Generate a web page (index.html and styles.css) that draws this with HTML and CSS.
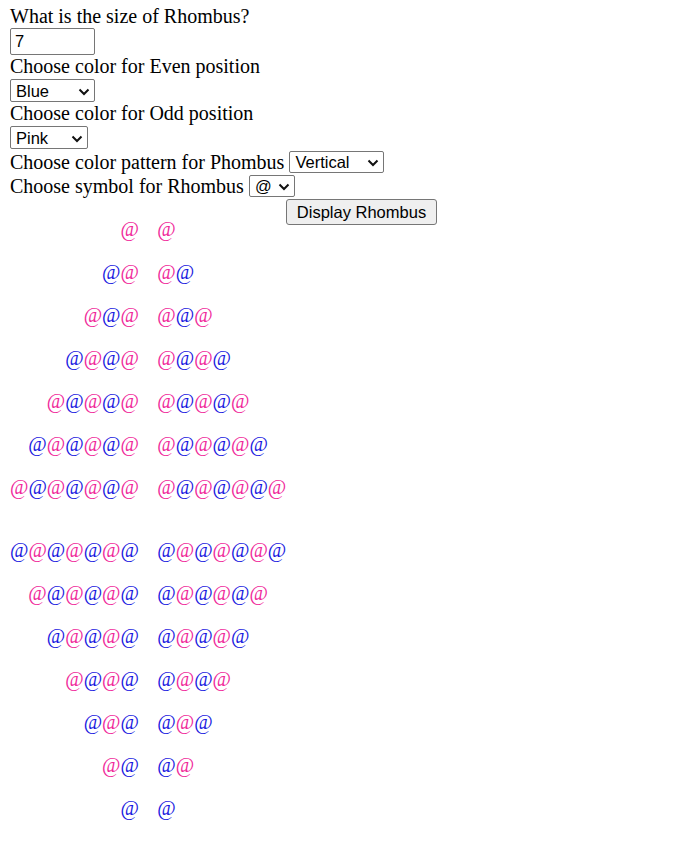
FILE: index.html
```html
<!DOCTYPE html>
<html>
<head>
<meta charset="utf-8">
<link rel="stylesheet" href="styles.css">
</head>
<body>
<div class="form">
  <div class="line">What is the size of Rhombus?</div>
  <input class="size" type="text" value="7">
  <div class="line">Choose color for Even position</div>
  <span class="sel sel-even"><select class="dd"><option>Blue</option></select><svg class="chev" width="12" height="8" viewBox="0 0 12 8"><path d="M1.5 1.5 L6 6 L10.5 1.5" fill="none" stroke="#111" stroke-width="2"/></svg></span>
  <div class="line">Choose color for Odd position</div>
  <span class="sel sel-odd"><select class="dd"><option>Pink</option></select><svg class="chev" width="12" height="8" viewBox="0 0 12 8"><path d="M1.5 1.5 L6 6 L10.5 1.5" fill="none" stroke="#111" stroke-width="2"/></svg></span>
  <div class="row row-pattern">
    <span>Choose color pattern for Phombus</span>
    <span class="sel sel-pattern"><select class="dd"><option>Vertical</option></select><svg class="chev" width="12" height="8" viewBox="0 0 12 8"><path d="M1.5 1.5 L6 6 L10.5 1.5" fill="none" stroke="#111" stroke-width="2"/></svg></span>
  </div>
  <div class="row row-symbol">
    <span>Choose symbol for Rhombus</span>
    <span class="sel sel-symbol"><select class="dd"><option>@</option></select><svg class="chev" width="12" height="8" viewBox="0 0 12 8"><path d="M1.5 1.5 L6 6 L10.5 1.5" fill="none" stroke="#111" stroke-width="2"/></svg></span>
  </div>
  <div class="btn-row"><button class="btn">Display Rhombus</button></div>
</div>

<div class="rhombus">
  <div class="half">
    <div class="r"><span class="l"><span class="p">@</span></span><span class="rt"><span class="p">@</span></span></div>
    <div class="r"><span class="l"><span class="b">@</span><span class="p">@</span></span><span class="rt"><span class="p">@</span><span class="b">@</span></span></div>
    <div class="r"><span class="l"><span class="p">@</span><span class="b">@</span><span class="p">@</span></span><span class="rt"><span class="p">@</span><span class="b">@</span><span class="p">@</span></span></div>
    <div class="r"><span class="l"><span class="b">@</span><span class="p">@</span><span class="b">@</span><span class="p">@</span></span><span class="rt"><span class="p">@</span><span class="b">@</span><span class="p">@</span><span class="b">@</span></span></div>
    <div class="r"><span class="l"><span class="p">@</span><span class="b">@</span><span class="p">@</span><span class="b">@</span><span class="p">@</span></span><span class="rt"><span class="p">@</span><span class="b">@</span><span class="p">@</span><span class="b">@</span><span class="p">@</span></span></div>
    <div class="r"><span class="l"><span class="b">@</span><span class="p">@</span><span class="b">@</span><span class="p">@</span><span class="b">@</span><span class="p">@</span></span><span class="rt"><span class="p">@</span><span class="b">@</span><span class="p">@</span><span class="b">@</span><span class="p">@</span><span class="b">@</span></span></div>
    <div class="r"><span class="l"><span class="p">@</span><span class="b">@</span><span class="p">@</span><span class="b">@</span><span class="p">@</span><span class="b">@</span><span class="p">@</span></span><span class="rt"><span class="p">@</span><span class="b">@</span><span class="p">@</span><span class="b">@</span><span class="p">@</span><span class="b">@</span><span class="p">@</span></span></div>
  </div>
  <div class="half half-bottom">
    <div class="r"><span class="l"><span class="b">@</span><span class="p">@</span><span class="b">@</span><span class="p">@</span><span class="b">@</span><span class="p">@</span><span class="b">@</span></span><span class="rt"><span class="b">@</span><span class="p">@</span><span class="b">@</span><span class="p">@</span><span class="b">@</span><span class="p">@</span><span class="b">@</span></span></div>
    <div class="r"><span class="l"><span class="p">@</span><span class="b">@</span><span class="p">@</span><span class="b">@</span><span class="p">@</span><span class="b">@</span></span><span class="rt"><span class="b">@</span><span class="p">@</span><span class="b">@</span><span class="p">@</span><span class="b">@</span><span class="p">@</span></span></div>
    <div class="r"><span class="l"><span class="b">@</span><span class="p">@</span><span class="b">@</span><span class="p">@</span><span class="b">@</span></span><span class="rt"><span class="b">@</span><span class="p">@</span><span class="b">@</span><span class="p">@</span><span class="b">@</span></span></div>
    <div class="r"><span class="l"><span class="p">@</span><span class="b">@</span><span class="p">@</span><span class="b">@</span></span><span class="rt"><span class="b">@</span><span class="p">@</span><span class="b">@</span><span class="p">@</span></span></div>
    <div class="r"><span class="l"><span class="b">@</span><span class="p">@</span><span class="b">@</span></span><span class="rt"><span class="b">@</span><span class="p">@</span><span class="b">@</span></span></div>
    <div class="r"><span class="l"><span class="p">@</span><span class="b">@</span></span><span class="rt"><span class="b">@</span><span class="p">@</span></span></div>
    <div class="r"><span class="l"><span class="b">@</span></span><span class="rt"><span class="b">@</span></span></div>
  </div>
</div>
</body>
</html>
```

FILE: styles.css
```css
html, body {
  margin: 0;
  padding: 0;
  background: #ffffff;
}
body {
  font-family: "Liberation Serif", "Times New Roman", serif;
  font-size: 20px;
  color: #000;
  padding: 5px 10px 0 10px;
}
.form {
  display: flex;
  flex-direction: column;
  align-items: flex-start;
}
.line {
  line-height: 23px;
  height: 23px;
  white-space: nowrap;
}
.size {
  box-sizing: border-box;
  width: 85px;
  height: 27px;
  margin: 0;
  border: 1px solid #767676;
  border-radius: 2px;
  padding: 0 0 0 4px;
  font-family: "Liberation Sans", Arial, sans-serif;
  font-size: 16.5px;
  color: #000;
  background: #fff;
}
.sel {
  position: relative;
  display: inline-flex;
}
.dd {
  appearance: none;
  -webkit-appearance: none;
  box-sizing: border-box;
  height: 22px;
  margin: 0;
  border: 1px solid #767676;
  border-radius: 2px;
  padding: 0 0 0 5px;
  font-family: "Liberation Sans", Arial, sans-serif;
  font-size: 16.5px;
  line-height: 20px;
  color: #000;
  background: #fff;
}
.chev {
  position: absolute;
  right: 5px;
  top: 50%;
  margin-top: -3px;
  pointer-events: none;
}
.sel-even { margin-top: 1px; }
.sel-even .dd { width: 85px; height: 23px; }
.sel-odd { margin-top: 1px; }
.sel-odd .dd { width: 78px; height: 23px; }
.sel-pattern .dd { width: 95px; }
.sel-symbol .dd { width: 46px; }
.row {
  display: flex;
  align-items: center;
  gap: 5px;
  height: 24px;
  line-height: 23px;
  white-space: nowrap;
}
.row-pattern { margin-top: 1px; }
.btn-row {
  display: flex;
  margin-top: 1px;
  padding-left: 276px;
}
.btn {
  box-sizing: border-box;
  width: 151px;
  height: 26px;
  margin: 0;
  border: 1px solid #767676;
  border-radius: 3px;
  background: #efefef;
  font-family: "Liberation Sans", Arial, sans-serif;
  font-size: 16.5px;
  color: #000;
  padding: 0;
  white-space: nowrap;
}
.rhombus {
  margin-top: -7px;
  font-family: "Liberation Serif", "Times New Roman", serif;
  font-size: 20px;
}
.half {
  display: flex;
  flex-direction: column;
  gap: 20px;
}
.half-bottom {
  margin-top: 40px;
}
.r {
  display: flex;
  height: 23px;
  line-height: 23px;
  white-space: nowrap;
}
.l {
  width: 128.9px;
  text-align: right;
  margin-right: 18.4px;
}
.p { color: #f0289a; }
.b { color: #1818e0; }
```
